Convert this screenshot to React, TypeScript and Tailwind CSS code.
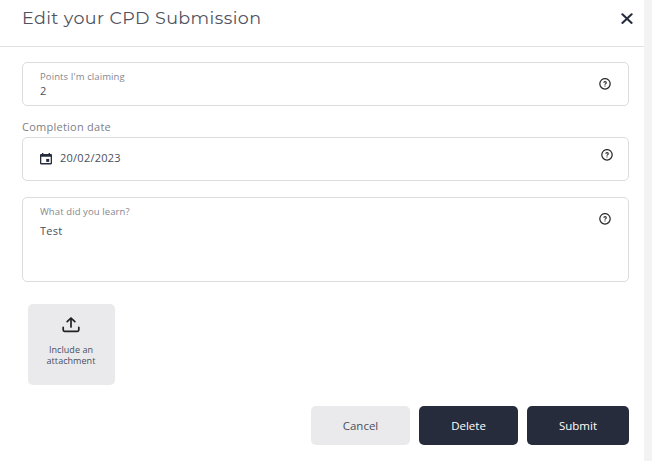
/**
 * CpdSubmissionForm - Modal form for editing a CPD submission.
 */

import type { ReactNode } from 'react'

// =============================================================================
// Icons
// =============================================================================

function CloseIcon() {
  return (
    <svg className="size-3" viewBox="0 0 12 12" fill="none" stroke="#272c3c" strokeWidth="2.1">
      <path d="M1.4 1.3 10.6 9.900M10.6 1.3 1.4 9.900" strokeLinecap="round" />
    </svg>
  )
}

function HelpIcon() {
  return (
    <svg className="block size-3" viewBox="0 0 12 12" fill="none" stroke="#292929">
      <circle cx="6" cy="5.8" r="5.2" strokeWidth="1.25" />
      <path d="M4.800 4.700c.1-1.400 2.500-1.400 2.500 0C7.300 5.600 6 5.600 6 6.700" strokeWidth="1.1" />
      <path d="M6 7.500v1.100" strokeWidth="1.1" />
    </svg>
  )
}

function CalendarIcon() {
  return (
    <svg className="size-3" viewBox="0 0 12 12" fill="#272c3c">
      <path
        fillRule="evenodd"
        d="M2 0h1.400v1h5.200V0H10v1h.8C11.500 1 12 1.500 12 2.200v8c0 .7-.5 1.200-1.200 1.200H1.200C.5 11.400 0 10.900 0 10.200V2.200C0 1.500.5 1 1.200 1H2V0ZM1.300 3.800v6.300h9.400V3.800H1.300Z"
      />
      <path d="M6.200 5.900h3v3h-3z" />
    </svg>
  )
}

function UploadIcon() {
  return (
    <svg
      className="h-4 w-[18px]"
      viewBox="0 0 18 16"
      fill="none"
      stroke="#202124"
      strokeWidth="1.7"
      strokeLinecap="round"
      strokeLinejoin="round"
    >
      <path d="M9 10V1.300M5.200 4.700 9 1 12.800 4.700" />
      <path d="M1.200 10.300v2.800c0 .8.500 1.300 1.300 1.300h13c.8 0 1.300-.5 1.300-1.300v-2.800" />
    </svg>
  )
}

// =============================================================================
// Sub-components
// =============================================================================

function HelpButton({ className }: { className: string }) {
  return (
    <button type="button" aria-label="Help" className={`shrink-0 self-start ${className}`}>
      <HelpIcon />
    </button>
  )
}

function Field({ className, children }: { className: string; children: ReactNode }) {
  return (
    <div className={`flex justify-between rounded-[5px] border border-[#dcdcde] pl-[17px] ${className}`}>
      {children}
    </div>
  )
}

// =============================================================================
// Main Component
// =============================================================================

export default function App() {
  return (
    <div className="h-[461px] w-[652px] overflow-hidden bg-[#f3f3f3] font-['Open_Sans','Noto_Sans',sans-serif] text-[#4b4f5c]">
      <div className="h-full w-[644px] bg-white">
        <header className="flex h-[47px] items-start justify-between border-b border-[#e2e2e3] pr-[11px] pl-[22px]">
          <h1 className="mt-[5px] font-[Montserrat,Inter,sans-serif] text-[17.5px] leading-[26px] font-normal tracking-[0.42px] whitespace-nowrap text-[#4f5360]">
            Edit your CPD Submission
          </h1>
          <button type="button" aria-label="Close" className="mt-[13px]">
            <CloseIcon />
          </button>
        </header>

        <main className="pt-[15px] pr-[15px] pl-[22px]">
          <Field className="h-[44px] pr-[17px]">
            <div className="pt-[7px]">
              <div className="text-[9.5px] leading-[14px] tracking-[0.1px] text-[#85878f]">Points I'm claiming</div>
              <div className="text-[11px] leading-[14px]">2</div>
            </div>
            <HelpButton className="mt-[15px]" />
          </Field>

          <div className="mt-[13px] mb-[2px] text-[11px] leading-4 tracking-[0.25px] text-[#7d7f87]">
            Completion date
          </div>
          <Field className="h-[44px] pr-[15px]">
            <div className="flex items-center gap-2 pb-px">
              <CalendarIcon />
              <span className="text-[11px] tracking-[0.25px]">20/02/2023</span>
            </div>
            <HelpButton className="mt-[11px]" />
          </Field>

          <Field className="mt-4 h-[85px] pr-[17px]">
            <div className="pt-[7px]">
              <div className="text-[9.5px] leading-[14px] tracking-[0.1px] text-[#85878f]">What did you learn?</div>
              <div className="mt-1 text-[11px] leading-4 tracking-[0.25px]">Test</div>
            </div>
            <HelpButton className="mt-[15px]" />
          </Field>

          <button
            type="button"
            className="mt-[22px] ml-[6px] flex h-[81px] w-[87px] flex-col items-center rounded-[5px] bg-[#eaeaec] pt-[13px] pr-px text-[9px] leading-[11px]"
          >
            <UploadIcon />
            <span className="mt-[11px] w-[60px] tracking-[0.05px]">Include an attachment</span>
          </button>

          <div className="mt-[21px] flex justify-end gap-[9px] text-[11.5px] font-medium">
            <button type="button" className="h-[39px] w-[99px] rounded-[5px] bg-[#eaeaec] font-normal">
              Cancel
            </button>
            <button type="button" className="h-[39px] w-[99px] rounded-[5px] bg-[#272c3c] text-white">
              Delete
            </button>
            <button type="button" className="h-[39px] w-[102px] rounded-[5px] bg-[#272c3c] text-white">
              Submit
            </button>
          </div>
        </main>
      </div>
    </div>
  )
}
